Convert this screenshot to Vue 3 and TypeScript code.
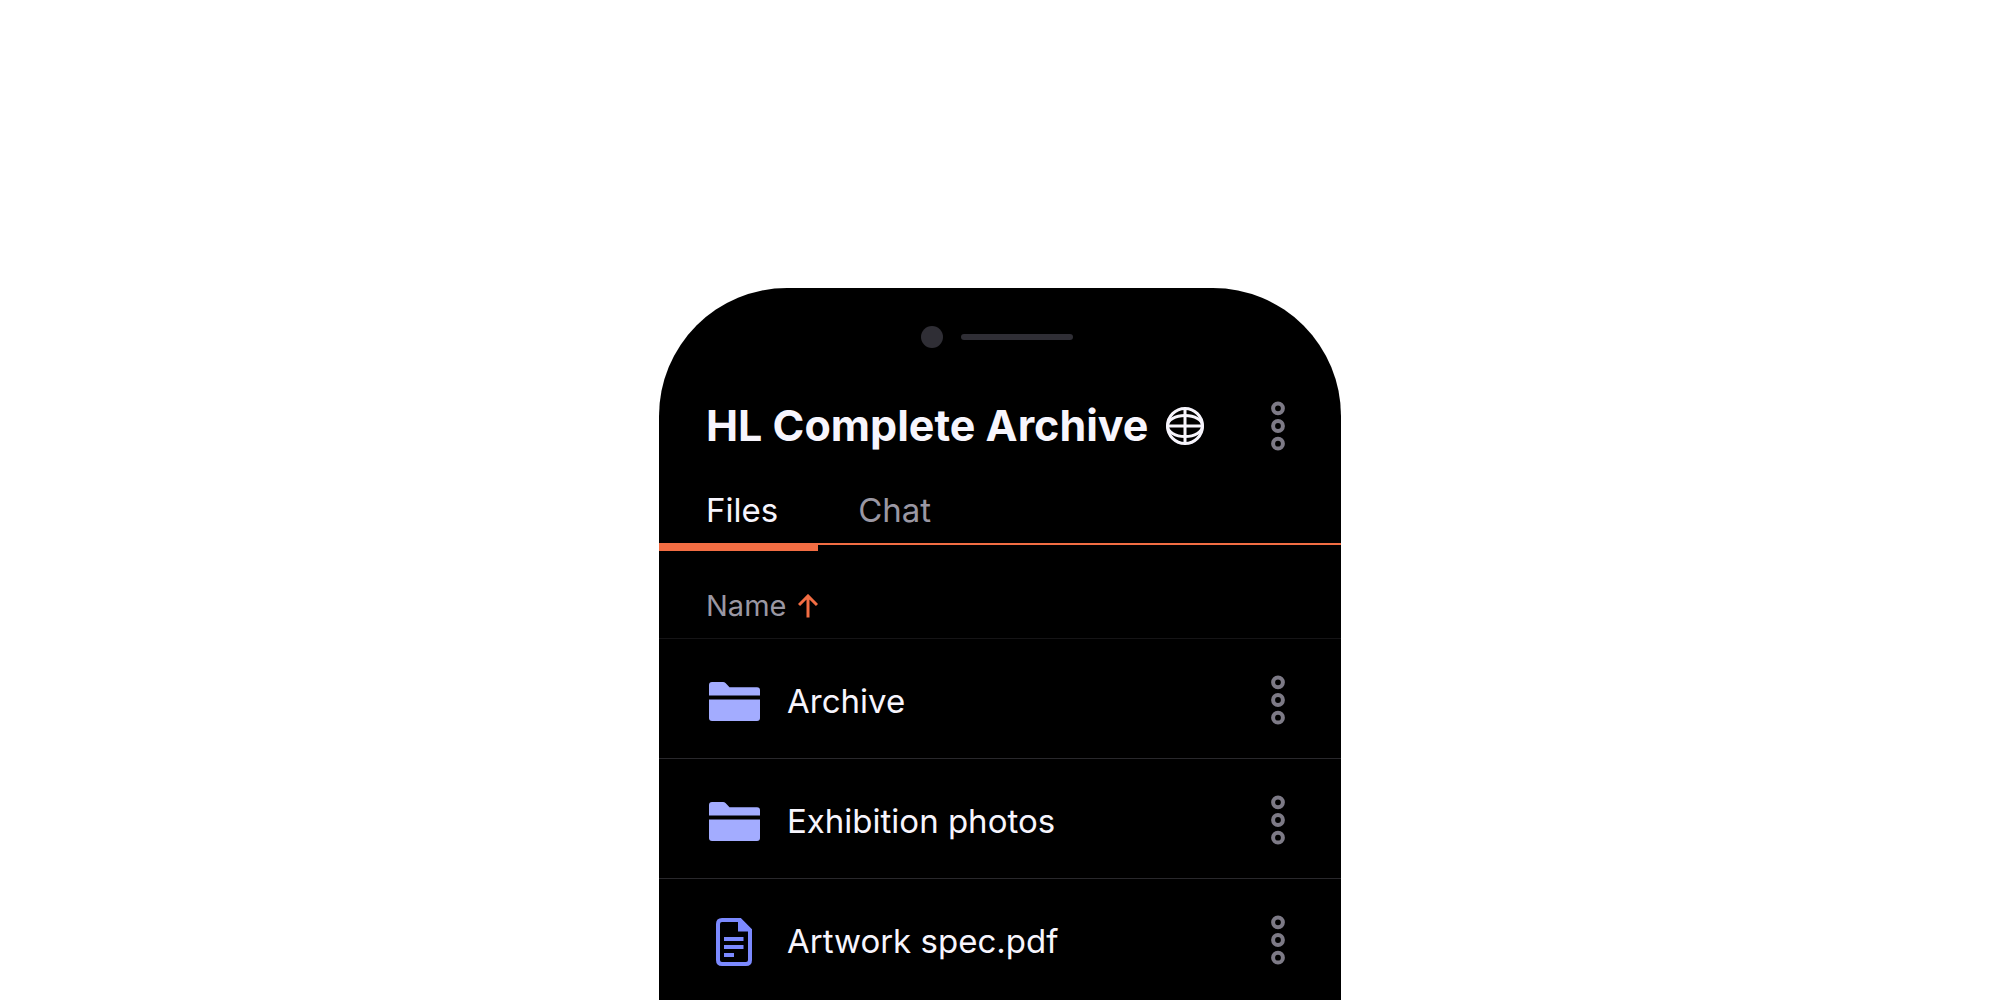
<script setup lang="ts">
import { ref } from 'vue'

interface Entry {
  name: string
  kind: 'folder' | 'file'
}

const tabs = ['Files', 'Chat']
const activeTab = ref('Files')
const entries: Entry[] = [
  { name: 'Archive', kind: 'folder' },
  { name: 'Exhibition photos', kind: 'folder' },
  { name: 'Artwork spec.pdf', kind: 'file' },
]
</script>

<template>
  <main class="stage">
    <section class="phone">
      <div class="notch" aria-hidden="true">
        <span class="camera"></span>
        <span class="speaker"></span>
      </div>

      <header class="header">
        <h1 class="title">HL Complete Archive</h1>
        <svg class="globe" viewBox="0 0 38 38" aria-hidden="true">
          <circle cx="19" cy="19" r="17.5" />
          <path d="M19 2V36M2 19H36" />
          <ellipse cx="19" cy="19" rx="17.5" ry="10.5" />
        </svg>
        <button class="more" type="button" aria-label="Archive options">
          <svg viewBox="0 0 14 50" aria-hidden="true">
            <circle cx="7" cy="7.300" r="4.900" />
            <circle cx="7" cy="25" r="4.900" />
            <circle cx="7" cy="42.700" r="4.900" />
          </svg>
        </button>
      </header>

      <nav class="tabs">
        <button
          v-for="tab in tabs"
          :key="tab"
          type="button"
          class="tab"
          :class="{ active: tab === activeTab }"
          @click="activeTab = tab"
        >
          {{ tab }}
        </button>
      </nav>

      <button class="sort" type="button">
        Name
        <svg class="arrow" viewBox="0 0 20 24" aria-hidden="true">
          <path d="M10 23.500V2M1 11L10 2L19 11" />
        </svg>
      </button>

      <ul class="list">
        <li v-for="entry in entries" :key="entry.name" class="row">
          <span class="icon">
            <svg v-if="entry.kind === 'folder'" class="folder" viewBox="0 0 51 39" aria-hidden="true">
              <path d="M0 13.500V3Q0 0 3 0H14Q15.500 0 16.500 1L20.500 5.300H48Q51 5.300 51 8.300V13.500Z" />
              <path d="M0 17.500H51V36Q51 39 48 39H3Q0 39 0 36Z" />
            </svg>
            <svg v-else class="file" viewBox="0 0 36 48" aria-hidden="true">
              <path class="sheet" d="M24 2H6Q2 2 2 6V42Q2 46 6 46H30Q34 46 34 42V12Z" />
              <path class="solid" d="M22 1H25L36 12V13.500H22ZM8 19H27.500V23H8ZM8 27H27.500V31H8ZM8 35H18V39H8Z" />
            </svg>
          </span>
          <span class="name">{{ entry.name }}</span>
          <button class="more" type="button" :aria-label="`Options for ${entry.name}`">
            <svg viewBox="0 0 14 50" aria-hidden="true">
              <circle cx="7" cy="7.300" r="4.900" />
              <circle cx="7" cy="25" r="4.900" />
              <circle cx="7" cy="42.700" r="4.900" />
            </svg>
          </button>
        </li>
      </ul>
    </section>
  </main>
</template>

<style>
body {
  margin: 0;
  background: #fff;
}
</style>

<style scoped>
.stage {
  box-sizing: border-box;
  min-height: 100vh;
  padding-top: 288px;
  display: flex;
  justify-content: center;
  font-family: Inter, "Liberation Sans", sans-serif;
}

.phone {
  width: 100%;
  max-width: 682px;
  background: #000;
  color: #f7f5fd;
  border-radius: 128px 128px 0 0;
}

button {
  padding: 0;
  border: 0;
  background: none;
  font: inherit;
  color: inherit;
  cursor: pointer;
}

.notch {
  height: 98px;
  display: flex;
  justify-content: center;
  align-items: center;
  gap: 18px;
  padding-right: 6px;
}

.camera {
  width: 22px;
  height: 22px;
  border-radius: 50%;
  background: #2f2e35;
}

.speaker {
  width: 112px;
  height: 6px;
  border-radius: 3px;
  background: #2f2e35;
}

.header {
  height: 80px;
  display: flex;
  align-items: center;
  padding: 0 48px 0 47px;
}

.title {
  margin: 0;
  padding-bottom: 2px;
  font-size: 43px;
  line-height: 52px;
  font-weight: 700;
}

.globe {
  width: 38px;
  height: 38px;
  margin-left: 18px;
  fill: none;
  stroke: #f7f5fd;
  stroke-width: 3;
}

.more {
  width: 30px;
  height: 50px;
  margin-left: auto;
}

.more svg {
  display: block;
  width: 14px;
  height: 50px;
  margin: 0 auto;
  fill: none;
  stroke: #7d7a86;
  stroke-width: 4;
}

.tabs {
  display: flex;
  height: 77px;
  border-bottom: 2px solid #f26d43;
}

.tab {
  box-sizing: border-box;
  height: 85px;
  padding: 10px 40px 0;
  font-size: 33px;
  line-height: 40px;
  color: #9a97a3;
  border-bottom: 8px solid transparent;
}

.tab:first-child {
  padding-left: 47px;
}

.tab.active {
  color: #f7f5fd;
  border-bottom-color: #f26d43;
}

.sort {
  width: 100%;
  height: 93px;
  padding: 28px 47px 0;
  display: flex;
  align-items: center;
  gap: 12px;
  font-size: 29px;
  color: #9a97a3;
}

.arrow {
  width: 20px;
  height: 24px;
  fill: none;
  stroke: #f26d43;
  stroke-width: 3;
}

.list {
  margin: 0;
  padding: 0;
  list-style: none;
}

.row {
  box-sizing: border-box;
  height: 120px;
  padding: 2px 48px 0;
  display: flex;
  align-items: center;
  border-top: 1px solid #29282c;
}

.row:first-child {
  border-top-color: #151416;
}

.icon {
  width: 54px;
  padding-top: 4px;
  display: flex;
  justify-content: center;
}

.icon svg {
  fill: #a3acff;
}

.folder {
  width: 51px;
  height: 39px;
}

.file {
  width: 36px;
  height: 48px;
}

.file .sheet {
  fill: none;
  stroke: #7c8aff;
  stroke-width: 4;
}

.file .solid {
  fill: #7c8aff;
}

.name {
  margin-left: 26px;
  padding-top: 2px;
  font-size: 33px;
  line-height: 40px;
}
</style>
